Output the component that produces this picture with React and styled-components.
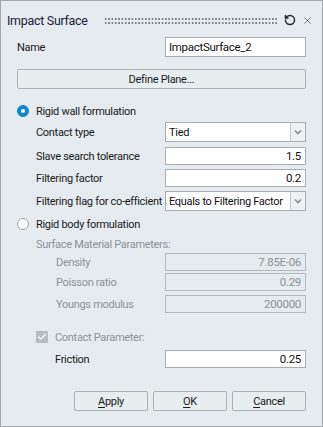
import React from "react";
import styled, { createGlobalStyle } from "styled-components";
import { RotateCcw, X, Check } from "lucide-react";

const GlobalStyle = createGlobalStyle`
  html, body {
    margin: 0;
    padding: 0;
    background: #e5ebef;
  }
  body {
    font-family: Roboto, "Liberation Sans", sans-serif;
    font-size: 11px;
    letter-spacing: -0.3px;
    color: #1b1b1b;
  }
`;

const Window = styled.div`
  width: 323px;
  height: 427px;
  box-sizing: border-box;
  border: 1px solid #a3a9ad;
  background: #e5ebef;
  display: flex;
  flex-direction: column;
`;

const TitleBar = styled.div`
  height: 36px;
  box-sizing: border-box;
  padding: 2px 9px 0 6px;
  display: flex;
  align-items: center;
`;

const Title = styled.span`
  font-size: 12.5px;
  color: #1f1a3a;
`;

const Grip = styled.div`
  flex: 1;
  height: 8px;
  margin: 1px 6px 0 16px;
  background-image: radial-gradient(circle, #7b8286 0.9px, transparent 1.2px);
  background-size: 3.35px 4px;
  background-position: 0 0;
`;

const IconButton = styled.span`
  display: flex;
  align-items: center;
  margin-left: ${(p) => p.$ml || 0}px;
`;

const Body = styled.div`
  padding: 0 16px 0 15px;
  display: flex;
  flex-direction: column;
`;

const Row = styled.div`
  height: ${(p) => p.$h || 18}px;
  margin-top: ${(p) => p.$mt || 0}px;
  padding-left: ${(p) => p.$indent || 0}px;
  display: flex;
  align-items: center;
  justify-content: space-between;
`;

const Label = styled.span`
  color: ${(p) => (p.$disabled ? "#8e9397" : "#1b1b1b")};
  white-space: nowrap;
`;

const Field = styled.div`
  width: 141px;
  height: 100%;
  box-sizing: border-box;
  border: 1px solid ${(p) => (p.$disabled ? "#b4b9bc" : "#a9adb1")};
  background: ${(p) => (p.$disabled ? "#e5ebef" : "#fff")};
  color: ${(p) => (p.$disabled ? "#8e9397" : "#111")};
  display: flex;
  align-items: center;
  justify-content: ${(p) => (p.$right ? "flex-end" : "flex-start")};
  padding: 0 4px 0 3px;
  font-size: 11.5px;
`;

const Combo = styled.div`
  width: 141px;
  flex-shrink: 0;
  height: 100%;
  box-sizing: border-box;
  border: 1px solid #a9adb1;
  background: #fff;
  display: flex;
  overflow: hidden;
`;

const ComboText = styled.span`
  flex: 1;
  display: flex;
  align-items: center;
  padding-left: 3px;
  font-size: 11px;
  color: #111;
  white-space: nowrap;
  overflow: hidden;
`;

const ComboArrow = styled.span`
  width: 14px;
  flex-shrink: 0;
  border-left: 1px solid #c4c8cb;
  background: #eef1f3;
  display: flex;
  align-items: center;
  justify-content: center;
`;

const WideButton = styled.div`
  height: 100%;
  flex: 1;
  box-sizing: border-box;
  border: 1px solid #adb2b5;
  border-radius: 2px;
  background: #e8edf0;
  display: flex;
  align-items: center;
  justify-content: center;
`;

const Radio = styled.span`
  width: 12px;
  height: 12px;
  box-sizing: border-box;
  border-radius: 50%;
  margin: 0 7px 0 1px;
  background: ${(p) => (p.$checked ? "#0f86d2" : "#fff")};
  border: 1px solid ${(p) => (p.$checked ? "#0f86d2" : "#9ea3a7")};
  display: flex;
  align-items: center;
  justify-content: center;
  &::after {
    content: "";
    display: ${(p) => (p.$checked ? "block" : "none")};
    width: 4px;
    height: 4px;
    border-radius: 50%;
    background: #fff;
  }
`;

const Option = styled.div`
  display: flex;
  align-items: center;
`;

const CheckBox = styled.span`
  width: 12px;
  height: 12px;
  border-radius: 1px;
  background: #b7bdc2;
  margin-right: 7px;
  display: flex;
  align-items: center;
  justify-content: center;
  color: #fff;
`;

const ButtonBar = styled.div`
  height: 20px;
  margin-top: 23px;
  display: flex;
  justify-content: flex-end;
  gap: 5px;
`;

const DialogButton = styled.div`
  width: 74px;
  height: 20px;
  box-sizing: border-box;
  border: 1px solid #adb2b5;
  border-radius: 2px;
  background: #e8edf0;
  display: flex;
  align-items: center;
  justify-content: center;
  u {
    text-decoration: underline;
    text-underline-offset: 2px;
  }
`;

function Chevron() {
  return (
    <svg width="8" height="6" viewBox="0 0 8 6">
      <path d="M1 1.5 L4 4.5 L7 1.5" fill="none" stroke="#8a8f93" strokeWidth="1.6" />
    </svg>
  );
}

function TextRow({ label, value, mt, indent, disabled, right = true }) {
  return (
    <Row $mt={mt} $indent={indent}>
      <Label $disabled={disabled}>{label}</Label>
      <Field $disabled={disabled} $right={right}>
        {value}
      </Field>
    </Row>
  );
}

function ComboRow({ label, value, mt }) {
  return (
    <Row $h={20} $mt={mt} $indent={20}>
      <Label>{label}</Label>
      <Combo>
        <ComboText>{value}</ComboText>
        <ComboArrow>
          <Chevron />
        </ComboArrow>
      </Combo>
    </Row>
  );
}

export default function App() {
  return (
    <>
      <GlobalStyle />
      <Window>
        <TitleBar>
          <Title>Impact Surface</Title>
          <Grip />
          <IconButton>
            <RotateCcw size={12} strokeWidth={3} color="#2b2b2b" />
          </IconButton>
          <IconButton $ml={6}>
            <X size={11} strokeWidth={1.6} color="#444" />
          </IconButton>
        </TitleBar>
        <Body>
          <Row $h={20} $indent={1}>
            <Label>Name</Label>
            <Field $right={false}>ImpactSurface_2</Field>
          </Row>
          <Row $h={20} $mt={12} $indent={1}>
            <WideButton>Define Plane...</WideButton>
          </Row>

          <Row $h={16} $mt={14}>
            <Option>
              <Radio $checked />
              <Label>Rigid wall formulation</Label>
            </Option>
          </Row>
          <ComboRow label="Contact type" value="Tied" mt={3} />
          <TextRow label="Slave search tolerance" value="1.5" mt={5} indent={20} />
          <TextRow label="Filtering factor" value="0.2" mt={4} indent={20} />
          <ComboRow label="Filtering flag for co-efficient" value="Equals to Filtering Factor" mt={4} />

          <Row $h={16} $mt={5}>
            <Option>
              <Radio />
              <Label>Rigid body formulation</Label>
            </Option>
          </Row>
          <Row $h={16} $mt={4} $indent={20}>
            <Label $disabled>Surface Material Parameters:</Label>
          </Row>
          <TextRow label="Density" value="7.85E-06" mt={1} indent={40} disabled />
          <TextRow label="Poisson ratio" value="0.29" mt={2} indent={40} disabled />
          <TextRow label="Youngs modulus" value="200000" mt={4} indent={40} disabled />

          <Row $h={16} $mt={16} $indent={20}>
            <Option>
              <CheckBox>
                <Check size={10} strokeWidth={3} />
              </CheckBox>
              <Label $disabled>Contact Parameter:</Label>
            </Option>
          </Row>
          <TextRow label="Friction" value="0.25" mt={5} indent={39} />

          <ButtonBar>
            <DialogButton>
              <span><u>A</u>pply</span>
            </DialogButton>
            <DialogButton>
              <span><u>O</u>K</span>
            </DialogButton>
            <DialogButton>
              <span><u>C</u>ancel</span>
            </DialogButton>
          </ButtonBar>
        </Body>
      </Window>
    </>
  );
}
